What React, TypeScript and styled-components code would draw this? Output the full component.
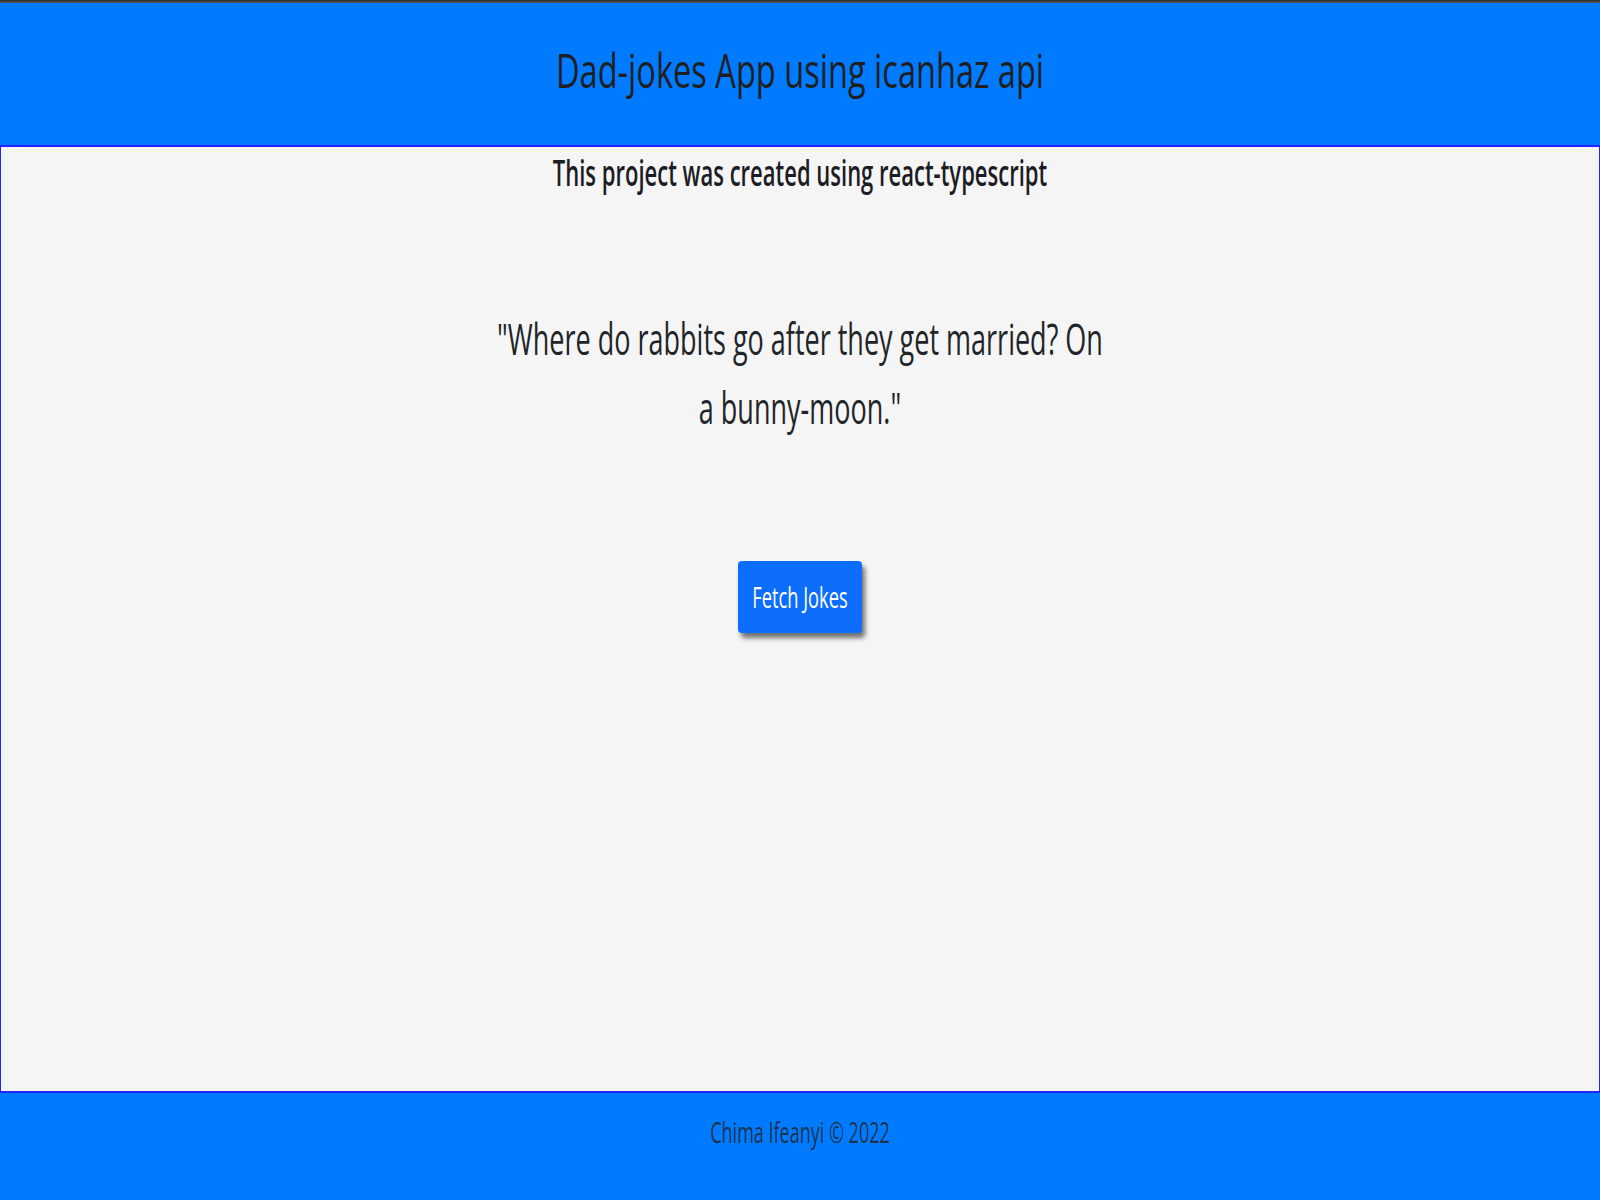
import React from "react";
import styled, { createGlobalStyle } from "styled-components";

const GlobalStyle = createGlobalStyle`
  html, body {
    margin: 0;
    padding: 0;
    background: #f5f5f5;
  }
  body {
    font-family: "Open Sans", "Noto Sans", Arial, sans-serif;
    color: #212529;
  }
  * { box-sizing: border-box; }
`;

const Page = styled.div`
  min-height: 100vh;
  display: flex;
  flex-direction: column;
`;

const TopStrip = styled.div`
  height: 3px;
  background: linear-gradient(#2a2a2a, #5a5a5a);
`;

const Header = styled.header`
  height: 142px;
  background: #007bff;
  display: flex;
  align-items: center;
  justify-content: center;
  padding-bottom: 8px;
`;

const Stretched = styled.div<{ $scale: number }>`
  transform: scaleY(${(p) => p.$scale});
  transform-origin: center;
`;

const Title = styled(Stretched).attrs({ as: "h1" })`
  margin: 0;
  font-size: 32.6px;
  font-weight: 500;
  line-height: 1.2;
  color: #1f1f1f;
`;

const Main = styled.main`
  flex: 1;
  display: flex;
  flex-direction: column;
  align-items: center;
  background: #f5f5f5;
  border: 1px solid #2323ff;
  border-top-width: 2px;
  border-bottom-width: 2px;
`;

const Subtitle = styled(Stretched).attrs({ as: "h3" })`
  margin: 12px 0 0;
  font-size: 22px;
  font-weight: 600;
  line-height: 1.2;
  color: #1c1c24;
`;

const Joke = styled(Stretched).attrs({ as: "p" })`
  margin: 146px 0 0;
  max-width: 615px;
  text-align: center;
  font-size: 27px;
  font-weight: 400;
  line-height: 42.5px;
  color: #212529;
`;

const FetchButton = styled.button`
  margin-top: 145px;
  width: 124px;
  height: 72px;
  border: none;
  border-radius: 4px;
  background: #0d6efd;
  color: #ffffff;
  box-shadow: 3px 5px 5px rgba(0, 0, 0, 0.55);
  cursor: pointer;
  display: flex;
  align-items: center;
  justify-content: center;
  padding: 0;
  font-family: "Open Sans", "Noto Sans", Arial, sans-serif;
`;

const ButtonLabel = styled(Stretched).attrs({ as: "span" })`
  display: inline-block;
  font-size: 18.3px;
  line-height: 1.2;
`;

const Footer = styled.footer`
  height: 107px;
  background: #007bff;
  display: flex;
  align-items: center;
  justify-content: center;
  padding-bottom: 27px;
`;

const FooterText = styled(Stretched).attrs({ as: "p" })`
  margin: 0;
  font-size: 18px;
  line-height: 1.2;
  color: rgba(33, 37, 41, 0.85);
`;

export default function App() {
  return (
    <Page>
      <GlobalStyle />
      <TopStrip />
      <Header>
        <Title $scale={1.48}>Dad-jokes App using icanhaz api</Title>
      </Header>
      <Main>
        <Subtitle $scale={1.6}>This project was created using react-typescript</Subtitle>
        <Joke $scale={1.6}>"Where do rabbits go after they get married? On a bunny-moon."</Joke>
        <FetchButton type="button">
          <ButtonLabel $scale={1.55}>Fetch Jokes</ButtonLabel>
        </FetchButton>
      </Main>
      <Footer>
        <FooterText $scale={1.6}>Chima Ifeanyi © 2022</FooterText>
      </Footer>
    </Page>
  );
}
